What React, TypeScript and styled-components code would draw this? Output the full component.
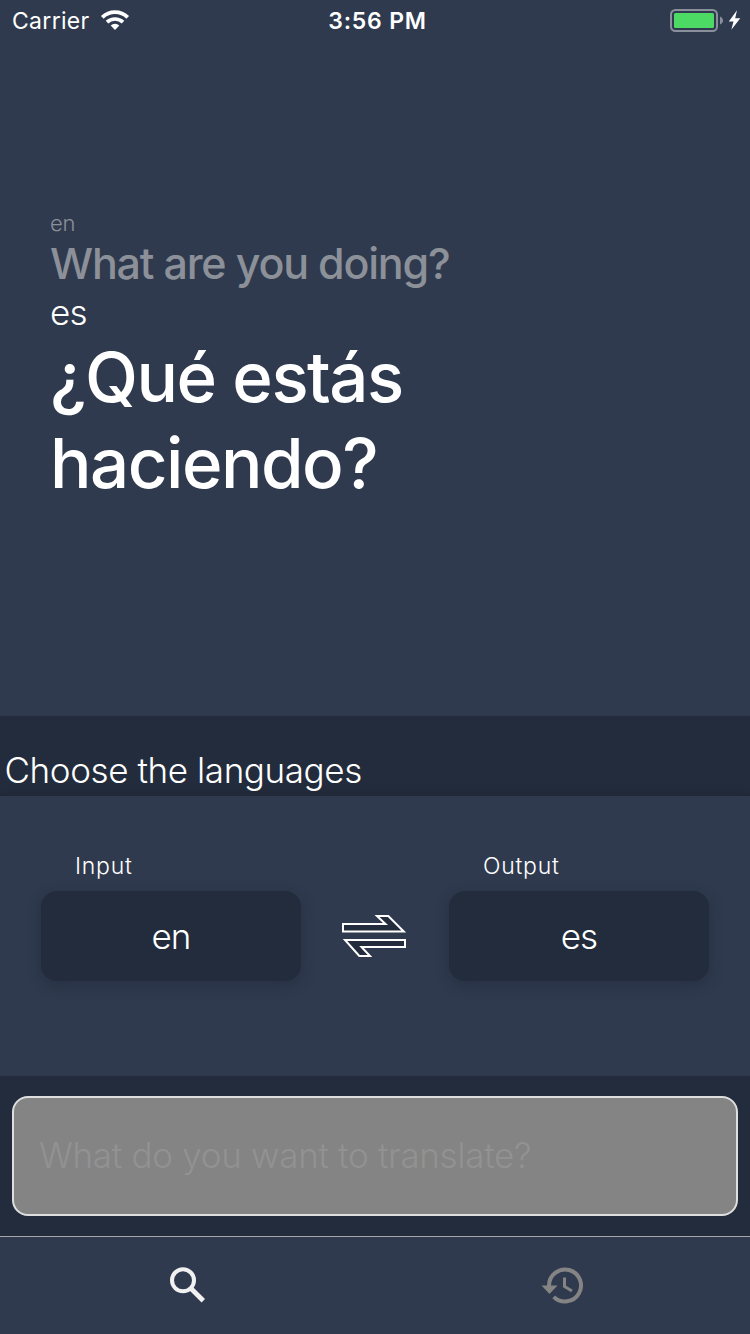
import React from "react";
import styled, { createGlobalStyle } from "styled-components";

const slate = "#2f3a4e";
const ink = "#232c3c";

const GlobalStyle = createGlobalStyle`
  * { box-sizing: border-box; }
  body {
    margin: 0;
    background: ${slate};
    font-family: Inter, "Liberation Sans", sans-serif;
    color: #fff;
  }
`;

const Screen = styled.div`
  width: 750px;
  height: 1334px;
  display: flex;
  flex-direction: column;
  background: ${slate};
  overflow: hidden;
`;

const StatusBar = styled.header`
  height: 40px;
  flex: none;
  display: grid;
  grid-template-columns: 1fr auto 1fr;
  align-items: center;
  padding: 0 9px 0 12px;
`;

const Carrier = styled.div`
  display: flex;
  align-items: center;
  gap: 10px;
  font-size: 23px;
  line-height: 38px;
  letter-spacing: 0.3px;
`;

const CarrierName = styled.span`
  padding-top: 2px;
`;

const Clock = styled.div`
  padding: 2px 0 0 2px;
  font-size: 23px;
  font-weight: 580;
  line-height: 38px;
  letter-spacing: 0.8px;
`;

const Power = styled.div`
  display: flex;
  align-items: center;
  justify-content: flex-end;
`;

const Translation = styled.main`
  height: 676px;
  flex: none;
  display: flex;
  flex-direction: column;
  padding: 170px 50px 0;
`;

const Phrase = styled.p<{ $size: number; $line: number; $weight: number; $track?: number; $muted?: boolean }>`
  margin: 0;
  width: 420px;
  font-size: ${(p) => p.$size}px;
  line-height: ${(p) => p.$line}px;
  font-weight: ${(p) => p.$weight};
  letter-spacing: ${(p) => p.$track ?? 0}px;
  color: ${(p) => (p.$muted ? "#8c9098" : "#fff")};
`;

const SectionTitle = styled.h2`
  margin: 0;
  height: 80px;
  flex: none;
  padding: 29px 4.5px 0;
  background: ${ink};
  font-size: 35px;
  font-weight: 300;
  line-height: 50px;
  letter-spacing: -0.4px;
`;

const Languages = styled.section`
  height: 280px;
  flex: none;
  display: flex;
  justify-content: space-between;
  align-items: flex-start;
  padding: 50px 41px 0;
  box-shadow: 0 0 8px rgba(20, 26, 38, 0.35);
`;

const Picker = styled.div`
  width: 260px;
  display: flex;
  flex-direction: column;
`;

const PickerLabel = styled.span`
  padding-left: 34px;
  height: 45px;
  font-size: 23px;
  font-weight: 300;
  line-height: 40px;
  letter-spacing: 0.75px;
`;

const PickerButton = styled.button`
  height: 90px;
  border: 0;
  border-radius: 16px;
  padding: 0;
  background: ${ink};
  box-shadow: 0 4px 14px rgba(28, 35, 49, 0.4);
  color: #fff;
  font: 300 35px/90px Inter, "Liberation Sans", sans-serif;
  letter-spacing: -0.9px;
`;

const SwapIcon = styled.svg`
  margin: 68px 2px 0 0;
  display: block;
`;

const Composer = styled.section`
  position: relative;
  height: 160px;
  flex: none;
  padding: 20px 12px;
  background: ${ink};
`;

const Field = styled.input`
  display: block;
  width: 100%;
  height: 120px;
  padding: 0 25px 2px;
  border: 2px solid #dedede;
  border-radius: 16px;
  background: #848484;
  font: 300 35px Inter, "Liberation Sans", sans-serif;
  letter-spacing: -0.3px;
  color: #fff;
  outline: none;
  &::placeholder { color: #929292; opacity: 1; }
`;

const TabBar = styled.nav`
  flex: 1;
  display: grid;
  grid-template-columns: 1fr 1fr;
  border-top: 1px solid #a7a7aa;
`;

const Tab = styled.div`
  display: flex;
  justify-content: center;
  align-items: center;
`;

export default function App() {
  return (
    <>
      <GlobalStyle />
      <Screen>
        <StatusBar>
          <Carrier>
            <CarrierName>Carrier</CarrierName>
            <svg width="30" height="22" viewBox="100 9 30 22" fill="none" stroke="#fff">
              <path d="M102.3 17.3a18.2 18.2 0 0 1 25.4 0" strokeWidth="3.9" />
              <path d="M107 22.2a11.6 11.6 0 0 1 16 0" strokeWidth="3.7" />
              <path d="M110.7 25.6a6.2 6.2 0 0 1 8.6 0L115 29.9z" fill="#fff" stroke="none" />
            </svg>
          </Carrier>
          <Clock>3:56 PM</Clock>
          <Power>
            <svg width="72" height="24" viewBox="669 8 72 24" fill="none">
              <rect x="671" y="10" width="46" height="21" rx="4.5" stroke="#8a909b" strokeWidth="2" />
              <rect x="674" y="13" width="40" height="15" rx="1.5" fill="#4cd964" />
              <path d="M720 16.5c4 1.5 4 6.5 0 8z" fill="#8a909b" />
              <path d="M737 10.3L728.8 21.5h4.7L731.3 29.8L740.3 18.3h-5.1z" fill="#fff" />
            </svg>
          </Power>
        </StatusBar>

        <Translation>
          <Phrase $size={22} $line={26} $weight={300} $track={-0.2} $muted>en</Phrase>
          <Phrase $size={43} $line={55} $weight={550} $track={-1.2} $muted>What are you doing?</Phrase>
          <Phrase $size={35} $line={43} $weight={300} $track={-0.8}>es</Phrase>
          <Phrase $size={69} $line={86} $weight={550} $track={-1.5}>¿Qué estás haciendo?</Phrase>
        </Translation>

        <SectionTitle>Choose the languages</SectionTitle>

        <Languages>
          <Picker>
            <PickerLabel>Input</PickerLabel>
            <PickerButton>en</PickerButton>
          </Picker>
          <SwapIcon width="68" height="44" viewBox="340 914 68 44" fill={ink} stroke="#fff" strokeWidth="2">
            <path d="M343 924H385.5L377 916H388.3L403.8 931.5H343z" />
            <path d="M405 940H345L359.3 956H370L361.5 947H405z" />
          </SwapIcon>
          <Picker>
            <PickerLabel>Output</PickerLabel>
            <PickerButton>es</PickerButton>
          </Picker>
        </Languages>

        <Composer>
          <Field placeholder="What do you want to translate?" />
        </Composer>

        <TabBar>
          <Tab>
            <svg width="48" height="48" viewBox="164 1261.5 48 48" fill="none" stroke="#f1f1f1" strokeWidth="4">
              <circle cx="183" cy="1279.8" r="11" />
              <path d="M191.5 1288.5L203.3 1300.3" strokeWidth="4.8" />
            </svg>
          </Tab>
          <Tab>
            <svg width="48" height="48" viewBox="539 1261.5 48 48" fill="none" stroke="#848484" strokeWidth="4">
              <path d="M549 1286V1285A16 16 0 1 1 553.7 1296.3" />
              <path d="M541.5 1285H557.5L549.5 1293.5z" fill="#848484" stroke="none" />
              <path d="M564.5 1277V1286L572 1290.5" strokeWidth="3" />
            </svg>
          </Tab>
        </TabBar>
      </Screen>
    </>
  );
}
